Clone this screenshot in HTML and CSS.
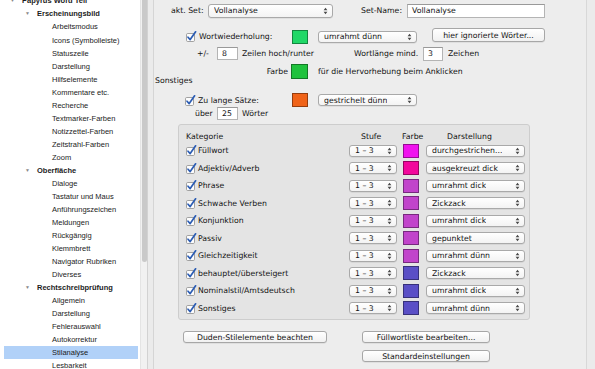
FILE: index.html
```html
<!DOCTYPE html>
<html lang="de">
<head>
<meta charset="utf-8">
<title>Stilanalyse</title>
<link rel="stylesheet" href="styles.css">
</head>
<body>
<div class="app">
  <nav class="sidebar">
    <div class="tree">
      <div class="item lvl0 head"><span class="tri">▼</span>Papyrus Word Teil</div>
      <div class="item lvl1 head"><span class="tri">▼</span>Erscheinungsbild</div>
      <div class="item lvl2">Arbeitsmodus</div>
      <div class="item lvl2">Icons (Symbolleiste)</div>
      <div class="item lvl2">Statuszeile</div>
      <div class="item lvl2">Darstellung</div>
      <div class="item lvl2">Hilfselemente</div>
      <div class="item lvl2">Kommentare etc.</div>
      <div class="item lvl2">Recherche</div>
      <div class="item lvl2">Textmarker-Farben</div>
      <div class="item lvl2">Notizzettel-Farben</div>
      <div class="item lvl2">Zeitstrahl-Farben</div>
      <div class="item lvl2">Zoom</div>
      <div class="item lvl1 head"><span class="tri">▼</span>Oberfläche</div>
      <div class="item lvl2">Dialoge</div>
      <div class="item lvl2">Tastatur und Maus</div>
      <div class="item lvl2">Anführungszeichen</div>
      <div class="item lvl2">Meldungen</div>
      <div class="item lvl2">Rückgängig</div>
      <div class="item lvl2">Klemmbrett</div>
      <div class="item lvl2">Navigator Rubriken</div>
      <div class="item lvl2">Diverses</div>
      <div class="item lvl1 head"><span class="tri">▼</span>Rechtschreibprüfung</div>
      <div class="item lvl2">Allgemein</div>
      <div class="item lvl2">Darstellung</div>
      <div class="item lvl2">Fehlerauswahl</div>
      <div class="item lvl2">Autokorrektur</div>
      <div class="item lvl2 selected">Stilanalyse</div>
      <div class="item lvl2">Lesbarkeit</div>
    </div>
  </nav>
  <div class="scrollbar"><div class="thumb"></div></div>
  <div class="gutter"></div>

  <main class="panel">
    <div class="row r1">
      <span class="lbl w-aktset">akt. Set:</span>
      <div class="select w-set"><span>Vollanalyse</span><svg class="arr" width="5" height="8" viewBox="0 0 5 8"><path d="M0.6 3.3 L2.5 0.8 L4.4 3.3Z M0.6 4.7 L2.5 7.2 L4.4 4.7Z"/></svg></div>
      <span class="lbl w-setname">Set-Name:</span>
      <div class="field w-name">Vollanalyse</div>
    </div>

    <div class="row r2">
      <label class="check w-chk1"><svg class="cb" width="11" height="11" viewBox="0 0 11 11"><rect x="0.5" y="2.5" width="8" height="8" rx="1.2"/><path d="M2 6.2 L4.2 8.6 L9.6 0.8"/></svg>Wortwiederholung:</label>
      <span class="swatch c-green"></span>
      <div class="select w-style"><span>umrahmt dünn</span><svg class="arr" width="5" height="8" viewBox="0 0 5 8"><path d="M0.6 3.3 L2.5 0.8 L4.4 3.3Z M0.6 4.7 L2.5 7.2 L4.4 4.7Z"/></svg></div>
      <div class="button w-ign">hier ignorierte Wörter...</div>
    </div>

    <div class="row r3">
      <span class="lbl w-pm">+/-</span>
      <div class="field small w-num1">8</div>
      <span class="lbl w-zeilen">Zeilen hoch/runter</span>
      <span class="lbl w-wl">Wortlänge mind.</span>
      <div class="field small w-num2">3</div>
      <span class="lbl sp-zeichen">Zeichen</span>
    </div>

    <div class="row r4">
      <span class="lbl w-farbe">Farbe</span>
      <span class="swatch big c-green2"></span>
      <span class="lbl sp-hint">für die Hervorhebung beim Anklicken</span>
    </div>

    <div class="row r5">
      <span class="lbl">Sonstiges</span>
    </div>

    <div class="row r6">
      <label class="check w-chk2"><svg class="cb" width="11" height="11" viewBox="0 0 11 11"><rect x="0.5" y="2.5" width="8" height="8" rx="1.2"/><path d="M2 6.2 L4.2 8.6 L9.6 0.8"/></svg>Zu lange Sätze:</label>
      <span class="swatch c-orange"></span>
      <div class="select w-style"><span>gestrichelt dünn</span><svg class="arr" width="5" height="8" viewBox="0 0 5 8"><path d="M0.6 3.3 L2.5 0.8 L4.4 3.3Z M0.6 4.7 L2.5 7.2 L4.4 4.7Z"/></svg></div>
    </div>

    <div class="row r7">
      <span class="lbl w-ueber">über</span>
      <div class="field small w-num1">25</div>
      <span class="lbl sp-woerter">Wörter</span>
    </div>

    <section class="group">
      <div class="grid">
        <div class="th">Kategorie</div>
        <div class="th th-stufe">Stufe</div>
        <div class="th th-farbe">Farbe</div>
        <div class="th th-dar">Darstellung</div>
      </div>
      <div class="grid rows" id="rows"></div>
    </section>

    <div class="row r8">
      <div class="button w-duden">Duden-Stilelemente beachten</div>
      <div class="button w-fuell">Füllwortliste bearbeiten...</div>
    </div>
    <div class="row r9">
      <div class="button w-std">Standardeinstellungen</div>
    </div>
  </main>
  <div class="rightpad"></div>
</div>
<script src="app.js"></script>
</body>
</html>
```

FILE: app.js
```js
const data = [
  ["Füllwort", "#f012ee", "durchgestrichen..."],
  ["Adjektiv/Adverb", "#f2079c", "ausgekreuzt dick"],
  ["Phrase", "#c144cb", "umrahmt dick"],
  ["Schwache Verben", "#c144cb", "Zickzack"],
  ["Konjunktion", "#c144cb", "umrahmt dick"],
  ["Passiv", "#c144cb", "gepunktet"],
  ["Gleichzeitigkeit", "#c144cb", "umrahmt dünn"],
  ["behauptet/übersteigert", "#5a4fc6", "Zickzack"],
  ["Nominalstil/Amtsdeutsch", "#5a4fc6", "umrahmt dick"],
  ["Sonstiges", "#5a4fc6", "umrahmt dünn"]
];
const arr = '<svg class="arr" width="5" height="8" viewBox="0 0 5 8"><path d="M0.6 3.3 L2.5 0.8 L4.4 3.3Z M0.6 4.7 L2.5 7.2 L4.4 4.7Z"/></svg>';
const cb = '<svg class="cb" width="11" height="11" viewBox="0 0 11 11"><rect x="0.5" y="2.5" width="8" height="8" rx="1.2"/><path d="M2 6.2 L4.2 8.6 L9.6 0.8"/></svg>';
const host = document.getElementById("rows");
host.innerHTML = data.map(([name, col, style]) =>
  `<label class="check cell">${cb}<span class="tl">${name}</span></label>` +
  `<div class="cell"><div class="select tsel w-stufe"><span>1 – 3</span>${arr}</div></div>` +
  `<div class="cell"><span class="swatch tsw" style="background:${col}"></span></div>` +
  `<div class="cell"><div class="select tsel w-dar"><span>${style}</span>${arr}</div></div>`
).join("");
```

FILE: styles.css
```css
* { box-sizing: border-box; }
html, body { margin: 0; padding: 0; }
body {
  width: 595px;
  height: 369px;
  overflow: hidden;
  background: #ececec;
  font-family: "DejaVu Sans", "Liberation Sans", sans-serif;
  font-size: 7.75px;
  color: #141414;
}
.app { display: flex; height: 369px; }

/* Sidebar */
.sidebar {
  width: 140px;
  flex: none;
  background: #fff;
  overflow: hidden;
  font-family: "Liberation Sans", Arial, sans-serif;
  font-size: 7.5px;
  color: #1c1c1c;
}
.tree { margin-top: -5.55px; }
.item {
  height: 13.03px;
  line-height: 13.03px;
  white-space: nowrap;
  display: flex;
  align-items: center;
}
.lvl0 { padding-left: 10px; }
.lvl1 { padding-left: 25px; }
.lvl2 { padding-left: 52px; }
.head { font-weight: bold; }
.tri {
  color: #8a8a8a;
  font-size: 5px;
  width: 12px;
  display: inline-block;
}
.selected {
  background: #b1d1f8;
  margin: 0 2px 0 4px;
  padding-left: 48px;
}

.scrollbar {
  width: 8px;
  flex: none;
  background: #f1f1f1;
  border-left: 1px solid #e4e4e4;
  border-right: 1px solid #d2d2d2;
}
.thumb {
  width: 5px;
  height: 266px;
  margin: -4px 0 0 1px;
  background: #c9c9c9;
  border-radius: 3px;
}
.gutter { width: 5px; flex: none; background: #ebebeb; }

/* Panel */
.panel {
  width: 434px;
  flex: none;
  border-left: 1px solid #d5d5d5;
  border-right: 1px solid #d8d8d8;
  background: #ededed;
  display: flex;
  flex-direction: column;
}
.rightpad { flex: 1; background: #ebebeb; }

.row { display: flex; align-items: center; white-space: nowrap; flex: none; }
.lbl { display: inline-block; }

.r1 { margin-top: 3px; height: 15px; padding-left: 17px; }
.w-aktset { width: 37px; }
.w-set { width: 125px; height: 14px; }
.w-setname { width: 46px; margin-left: 28px; }
.w-name { width: 138px; height: 14px; }

.r2 { margin-top: 11px; height: 15px; padding-left: 32px; }
.w-chk1 { width: 106px; }
.w-style { width: 99px; height: 12px; margin-left: 10px; }
.w-ign { width: 113px; height: 14px; margin-left: 15px; margin-top: -3px; }

.r3 { margin-top: 2px; height: 15px; padding-left: 43px; }
.w-pm { width: 20px; }
.w-num1 { width: 21px; height: 13px; }
.w-zeilen { width: 112px; margin-left: 4px; }
.w-wl { width: 69px; }
.w-num2 { width: 20px; height: 14px; }
.sp-zeichen { margin-left: 5px; }

.r4 { margin-top: 3px; height: 15px; padding-left: 107px; }
.w-farbe { width: 30px; text-align: right; padding-right: 3px; }
.sp-hint { margin-left: 10px; }

.r5 { margin-top: -4px; height: 10px; padding-left: 1px; }

.r6 { margin-top: 8px; height: 14px; padding-left: 31px; }
.w-chk2 { width: 107px; }

.r7 { height: 13px; padding-left: 41px; }
.w-ueber { width: 22px; }
.sp-woerter { margin-left: 4px; }

/* Controls */
.check { display: inline-flex; align-items: center; }
.cb { flex: none; margin-right: 2px; overflow: visible; }
.cb rect { fill: #fdfdfd; stroke: #8d8d8d; stroke-width: 0.8; }
.cb path { fill: none; stroke: #2b5cb3; stroke-width: 1.7; stroke-linecap: round; stroke-linejoin: round; }

.select {
  display: flex;
  align-items: center;
  justify-content: space-between;
  padding: 0 4px 0 5px;
  background: linear-gradient(#ffffff, #f3f3f3);
  border: 1px solid #a9a9a9;
  border-radius: 3px;
  box-shadow: 0 0.5px 0.5px rgba(0,0,0,0.12);
  flex: none;
}
.select span { overflow: hidden; }
.arr { flex: none; }
.arr path { fill: #4a4a4a; }

.field {
  display: flex;
  align-items: center;
  padding-left: 4px;
  background: #fff;
  border: 1px solid #b4b4b4;
  border-top-color: #999;
  flex: none;
}

.button {
  display: flex;
  align-items: center;
  justify-content: center;
  background: linear-gradient(#ffffff, #f1f1f1);
  border: 1px solid #a7a7a7;
  border-radius: 3px;
  box-shadow: 0 0.5px 0.5px rgba(0,0,0,0.12);
  flex: none;
}

.swatch {
  display: inline-block;
  width: 16px;
  height: 14px;
  border: 1px solid rgba(0,0,0,0.38);
  flex: none;
}
.swatch.big { width: 17px; height: 15px; }
.c-green { background: #20d867; }
.c-green2 { background: #1fc23d; }
.c-orange { background: #f06318; }

/* Group */
.group {
  margin: 4px 0 0 24px;
  width: 352px;
  height: 196px;
  background: #e4e4e4;
  border: 1px solid #cdcdcd;
  border-radius: 3px;
  padding: 7px 0 0 7px;
  flex: none;
}
.grid {
  display: grid;
  grid-template-columns: 163px 54px 23px 99px;
}
.th { height: 10px; line-height: 10px; }
.th-stufe { padding-left: 12px; }
.th-farbe { margin-left: -1px; }
.th-dar { padding-left: 21px; }
.rows { grid-auto-rows: 17.5px; }
.cell { display: flex; align-items: center; white-space: nowrap; }
.tsel { height: 12px; }
.w-stufe { width: 48px; }
.w-dar { width: 99px; }
.tl { margin-left: -1px; }

.r8 { margin-top: 11px; height: 12px; padding-left: 29px; }
.w-duden { width: 144px; height: 12px; }
.w-fuell { width: 128px; height: 12px; margin-left: 35px; }
.r9 { margin-top: 7px; height: 12px; padding-left: 208px; }
.w-std { width: 128px; height: 12px; }
```
